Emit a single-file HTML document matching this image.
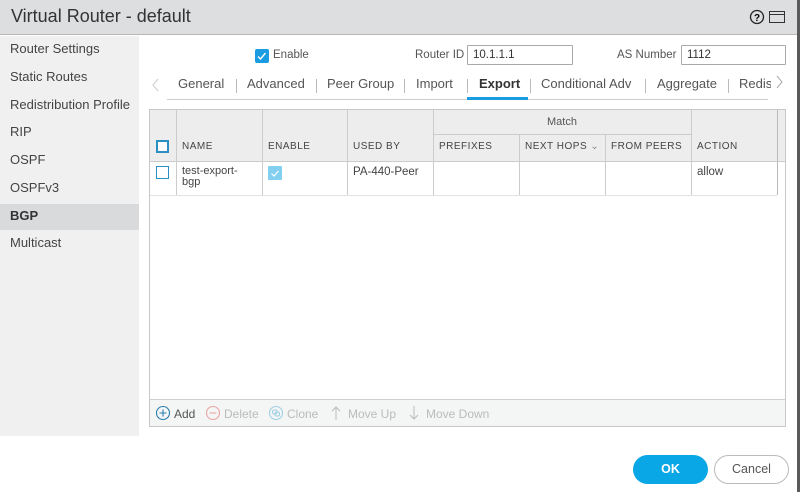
<!DOCTYPE html>
<html><head><style>
*{box-sizing:border-box;margin:0;padding:0}
body{width:800px;height:492px;overflow:hidden;background:#fff;font-family:"Liberation Sans",sans-serif;position:relative;color:#333}
.abs{position:absolute}
.title{left:0;top:0;width:798px;height:35px;background:#dcdedf;border-bottom:1px solid #b5b7b9}
.title span{position:absolute;left:11px;top:6px;font-size:18px;color:#333}
.side{left:0;top:36px;width:139px;height:400px;background:#f0f0f0}
.side div{position:absolute;left:10px;font-size:13px;color:#444}
.sel{left:0;top:204px;width:139px;height:26px;background:#d8dadc}
.redge{left:797px;top:0;width:3px;height:492px;background:#5a5a5a}
.lbl{font-size:11.5px;color:#555}
.inp{border:1px solid #aaa;height:20px;font-size:11.5px;padding:0 5px;line-height:18px;background:#fff;border-radius:1px;color:#333}
.tab{font-size:13px;color:#555;top:76px}
.sep{top:79px;width:1px;height:14px;background:#bbb}
.th{font-size:10px;letter-spacing:.5px;color:#444}
.vl{width:1px;background:#ccc}
.cb{width:13px;height:13px;border:2px solid #2b8fc4;background:#fff}
.tb{font-size:12px;color:#bbb;top:407px}
</style></head><body>
<div class="abs title"><span>Virtual Router - default</span>
<svg class="abs" style="left:749px;top:8px" width="40" height="18"><circle cx="8" cy="9" r="6.5" fill="none" stroke="#222" stroke-width="1.3"/><text x="8" y="13" font-size="10" font-weight="bold" text-anchor="middle" font-family="Liberation Sans">?</text><rect x="20.5" y="3.5" width="15" height="11" fill="none" stroke="#333"/><line x1="20.5" y1="6.5" x2="35.5" y2="6.5" stroke="#333"/></svg></div>
<div class="abs side">
<div style="top:5px">Router Settings</div><div style="top:33px">Static Routes</div><div style="top:61px">Redistribution Profile</div><div style="top:88px">RIP</div><div style="top:116px">OSPF</div><div style="top:144px">OSPFv3</div><div style="top:199px">Multicast</div></div>
<div class="abs sel"></div><div class="abs" style="left:10px;top:208px;font-size:13px;font-weight:bold;color:#333">BGP</div>
<div class="abs redge"></div>
<div class="abs" style="left:255px;top:49px;width:14px;height:14px;background:#1a9de0;border-radius:2px"><svg width="14" height="14"><path d="M3 7.5l2.5 2.5 5-6" stroke="#fff" stroke-width="1.4" fill="none"/></svg></div>
<div class="abs lbl" style="left:273px;top:49px">Enable</div>
<div class="abs lbl" style="left:415px;top:49px">Router ID</div>
<div class="abs inp" style="left:467px;top:45px;width:106px">10.1.1.1</div>
<div class="abs lbl" style="left:617px;top:49px">AS Number</div>
<div class="abs inp" style="left:681px;top:45px;width:105px">1112</div>
<svg class="abs" style="left:151px;top:77px" width="10" height="16"><path d="M7 2L2 8l5 6" stroke="#ccc" fill="none"/></svg>
<svg class="abs" style="left:775px;top:74px" width="10" height="16"><path d="M2 2l5 6-5 6" stroke="#aaa" fill="none"/></svg>
<div class="abs tab" style="left:178px">General</div><div class="abs sep" style="left:236px"></div>
<div class="abs tab" style="left:247px">Advanced</div><div class="abs sep" style="left:316px"></div>
<div class="abs tab" style="left:327px">Peer Group</div><div class="abs sep" style="left:404px"></div>
<div class="abs tab" style="left:416px">Import</div><div class="abs sep" style="left:467px"></div>
<div class="abs tab" style="left:479px;font-weight:bold;color:#333">Export</div><div class="abs sep" style="left:530px"></div>
<div class="abs tab" style="left:541px">Conditional Adv</div><div class="abs sep" style="left:645px"></div>
<div class="abs tab" style="left:657px">Aggregate</div><div class="abs sep" style="left:728px"></div>
<div class="abs tab" style="left:739px;width:32px;overflow:hidden;white-space:nowrap">Redist</div>
<div class="abs" style="left:167px;top:99px;width:601px;height:1px;background:#ccc"></div>
<div class="abs" style="left:467px;top:97px;width:61px;height:3px;background:#1a9de0"></div>
<div class="abs" style="left:149px;top:109px;width:637px;height:318px;border:1px solid #c8c8c8;background:#fff"></div>
<div class="abs" style="left:150px;top:110px;width:635px;height:52px;background:#ededed;border-bottom:1px solid #ccc"></div>
<div class="abs vl" style="left:176px;top:110px;height:85px"></div>
<div class="abs vl" style="left:262px;top:110px;height:85px"></div>
<div class="abs vl" style="left:347px;top:110px;height:85px"></div>
<div class="abs vl" style="left:433px;top:110px;height:85px"></div>
<div class="abs vl" style="left:519px;top:135px;height:60px"></div>
<div class="abs vl" style="left:605px;top:135px;height:60px"></div>
<div class="abs vl" style="left:691px;top:110px;height:85px"></div>
<div class="abs vl" style="left:777px;top:110px;height:85px;background:#bbb"></div>
<div class="abs" style="left:433px;top:134px;width:258px;height:1px;background:#ccc"></div>
<div class="abs" style="left:150px;top:195px;width:627px;height:1px;background:#e2e2e2"></div>
<div class="abs" style="left:547px;top:116px;font-size:11px;color:#555">Match</div>
<div class="abs cb" style="left:156px;top:140px"></div>
<div class="abs th" style="left:182px;top:141px">NAME</div>
<div class="abs th" style="left:268px;top:141px">ENABLE</div>
<div class="abs th" style="left:353px;top:141px">USED BY</div>
<div class="abs th" style="left:439px;top:141px">PREFIXES</div>
<div class="abs th" style="left:525px;top:141px">NEXT HOPS <span style="color:#888">&#8964;</span></div>
<div class="abs th" style="left:611px;top:141px">FROM PEERS</div>
<div class="abs th" style="left:697px;top:141px">ACTION</div>
<div class="abs cb" style="left:156px;top:166px;border-width:1.5px"></div>
<div class="abs" style="left:182px;top:166px;font-size:11px;line-height:11px;color:#444">test-export-<br>bgp</div>
<div class="abs" style="left:268px;top:166px;width:14px;height:14px;background:#82cff0;border-radius:1px"><svg width="14" height="14"><path d="M3.5 7.5l2.5 2.5 4.5-5" stroke="#fff" stroke-width="1.2" fill="none"/></svg></div>
<div class="abs" style="left:353px;top:166px;font-size:11.5px;color:#444">PA-440-Peer</div>
<div class="abs" style="left:697px;top:166px;font-size:11.5px;color:#444">allow</div>
<div class="abs" style="left:150px;top:399px;width:635px;height:27px;background:#f4f5f5;border-top:1px solid #d0d0d0"></div>
<svg class="abs" style="left:155px;top:405px" width="16" height="16"><circle cx="8" cy="8" r="6.5" fill="none" stroke="#2a7fb0" stroke-width="1.1"/><path d="M8 4.5v7M4.5 8h7" stroke="#2a7fb0" stroke-width="1.1"/></svg>
<div class="abs tb" style="left:174px;color:#555">Add</div>
<svg class="abs" style="left:205px;top:405px" width="16" height="16"><circle cx="8" cy="8" r="6.5" fill="none" stroke="#eba4a4" stroke-width="1.1"/><path d="M4.5 8h7" stroke="#eba4a4" stroke-width="1.1"/></svg>
<div class="abs tb" style="left:224px">Delete</div>
<svg class="abs" style="left:268px;top:405px" width="16" height="16"><circle cx="8" cy="8" r="6.5" fill="none" stroke="#9fd0e6" stroke-width="1.1"/><rect x="4.5" y="5" width="4.5" height="4" rx="1.5" fill="none" stroke="#9fd0e6"/><rect x="7" y="7" width="4.5" height="4" rx="1.5" fill="none" stroke="#9fd0e6"/></svg>
<div class="abs tb" style="left:287px">Clone</div>
<svg class="abs" style="left:330px;top:405px" width="12" height="16"><path d="M6 2v13M2 6l4-4 4 4" stroke="#bbb" fill="none"/></svg>
<div class="abs tb" style="left:348px">Move Up</div>
<svg class="abs" style="left:408px;top:405px" width="12" height="16"><path d="M6 1v13M2 10l4 4 4-4" stroke="#bbb" fill="none"/></svg>
<div class="abs tb" style="left:426px">Move Down</div>
<div class="abs" style="left:633px;top:455px;width:75px;height:29px;border-radius:15px;background:#0aa7e6;color:#fff;font-size:12.5px;font-weight:bold;text-align:center;line-height:29px">OK</div>
<div class="abs" style="left:714px;top:455px;width:75px;height:29px;border-radius:15px;border:1px solid #bbb;color:#555;font-size:12.5px;text-align:center;line-height:27px">Cancel</div>
</body></html>
